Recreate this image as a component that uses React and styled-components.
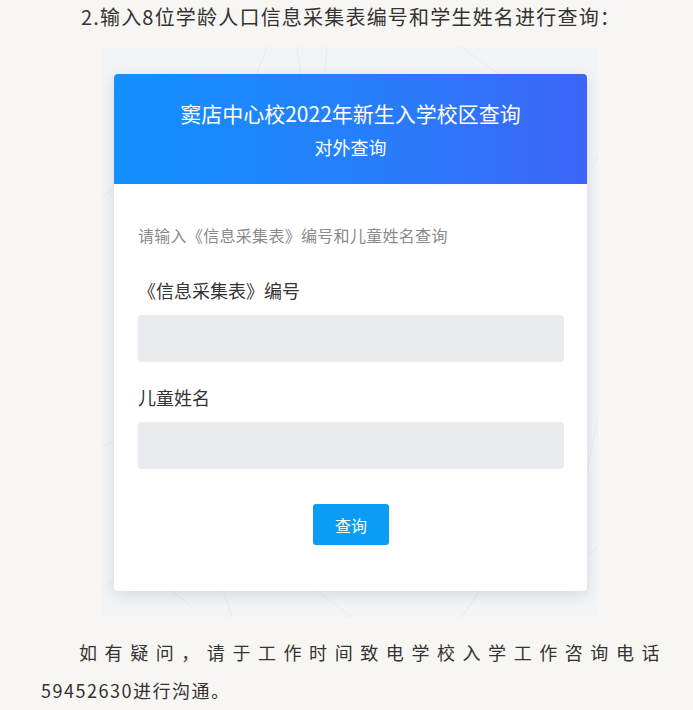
import React from 'react';
import styled, { createGlobalStyle } from 'styled-components';

const GlobalStyle = createGlobalStyle`
  html, body {
    margin: 0;
    padding: 0;
    background: #f7f6f2;
  }
  body {
    font-family: "Noto Sans CJK SC", "Noto Sans", sans-serif;
    color: #333;
  }
`;

// faint network lines behind the query card
const lines = encodeURIComponent(`
<svg xmlns="http://www.w3.org/2000/svg" width="496" height="570" viewBox="0 0 496 570">
  <g stroke="#e8eaee" stroke-width="1" fill="none">
    <path d="M165 0 L150 40"/>
    <path d="M195 0 L200 40"/>
    <path d="M225 0 L222 30"/>
    <path d="M360 0 L400 30"/>
    <path d="M0 150 L14 140"/>
    <path d="M490 120 L496 110"/>
    <path d="M0 400 L12 395"/>
    <path d="M484 430 L496 370"/>
    <path d="M0 540 L40 520 L90 560"/>
    <path d="M120 540 L130 570"/>
    <path d="M210 540 L250 570"/>
    <path d="M380 540 L360 570"/>
    <path d="M470 520 L496 500"/>
  </g>
</svg>`);

const Page = styled.div`
  padding: 2px 32px 0 41px;
  height: 710px;
  box-sizing: border-box;
  overflow: hidden;
`;

const Heading = styled.p`
  margin: 0;
  text-align: center;
  font-size: 20px;
  line-height: 30px;
  letter-spacing: 1.2px;
  color: #333;
`;

const Figure = styled.div`
  width: 496px;
  margin: 15px auto 0;
  padding: 27px 11px 26px 12px;
  box-sizing: border-box;
  background: #f3f4f7 url("data:image/svg+xml,${lines}") no-repeat;
  transform: translateX(-1px);
`;

const Card = styled.div`
  background: #fff;
  border-radius: 4px;
  overflow: hidden;
  box-shadow: 0 4px 14px rgba(40, 50, 80, 0.14);
`;

const Header = styled.div`
  height: 110px;
  background: linear-gradient(90deg, #1290fe 0%, #2580fb 50%, #3c66f7 100%);
  color: #fff;
  text-align: center;
  display: flex;
  flex-direction: column;
  align-items: center;
  justify-content: center;
  gap: 6px;
`;

const Title = styled.div`
  font-size: 21px;
  line-height: 30px;
`;

const Subtitle = styled.div`
  font-size: 18px;
  line-height: 26px;
`;

const Body = styled.div`
  padding: 39px 23px 46px 24px;
`;

const Hint = styled.div`
  font-size: 16px;
  line-height: 24px;
  letter-spacing: 0.3px;
  color: #8a8a8a;
  margin-bottom: 30px;
`;

const Label = styled.div`
  font-size: 18px;
  line-height: 26px;
  color: #333;
  margin-top: ${p => p.$top || 0}px;
`;

const Input = styled.input`
  display: block;
  width: 100%;
  box-sizing: border-box;
  height: 47px;
  margin-top: 12px;
  border: none;
  border-radius: 4px;
  background: #e9ebee;
  outline: none;
  padding: 0 12px;
  font-size: 16px;
  font-family: inherit;
`;

const Actions = styled.div`
  display: flex;
  justify-content: center;
  margin-top: 35px;
`;

const Button = styled.button`
  width: 76px;
  height: 41px;
  border: none;
  border-radius: 3px;
  background: #0b9cf6;
  color: #fff;
  font-family: inherit;
  font-size: 16px;
  cursor: pointer;
`;

const Note = styled.p`
  margin: 16px 0 0;
  font-size: 18px;
  line-height: 38px;
  letter-spacing: 1.5px;
  text-align: justify;
  text-indent: 38px;
  color: #333;
`;

const Phone = styled.span`
  white-space: nowrap;
`;

export default function App() {
  return (
    <>
      <GlobalStyle />
      <Page>
        <Heading>2.输入8位学龄人口信息采集表编号和学生姓名进行查询：</Heading>
        <Figure>
          <Card>
            <Header>
              <Title>窦店中心校2022年新生入学校区查询</Title>
              <Subtitle>对外查询</Subtitle>
            </Header>
            <Body>
              <Hint>请输入《信息采集表》编号和儿童姓名查询</Hint>
              <Label>《信息采集表》编号</Label>
              <Input type="text" />
              <Label $top={22}>儿童姓名</Label>
              <Input type="text" />
              <Actions>
                <Button>查询</Button>
              </Actions>
            </Body>
          </Card>
        </Figure>
        <Note>
          如有疑问，请于工作时间致电学校入学工作咨询电话
          <Phone>59452630进行沟通。</Phone>
        </Note>
      </Page>
    </>
  );
}
